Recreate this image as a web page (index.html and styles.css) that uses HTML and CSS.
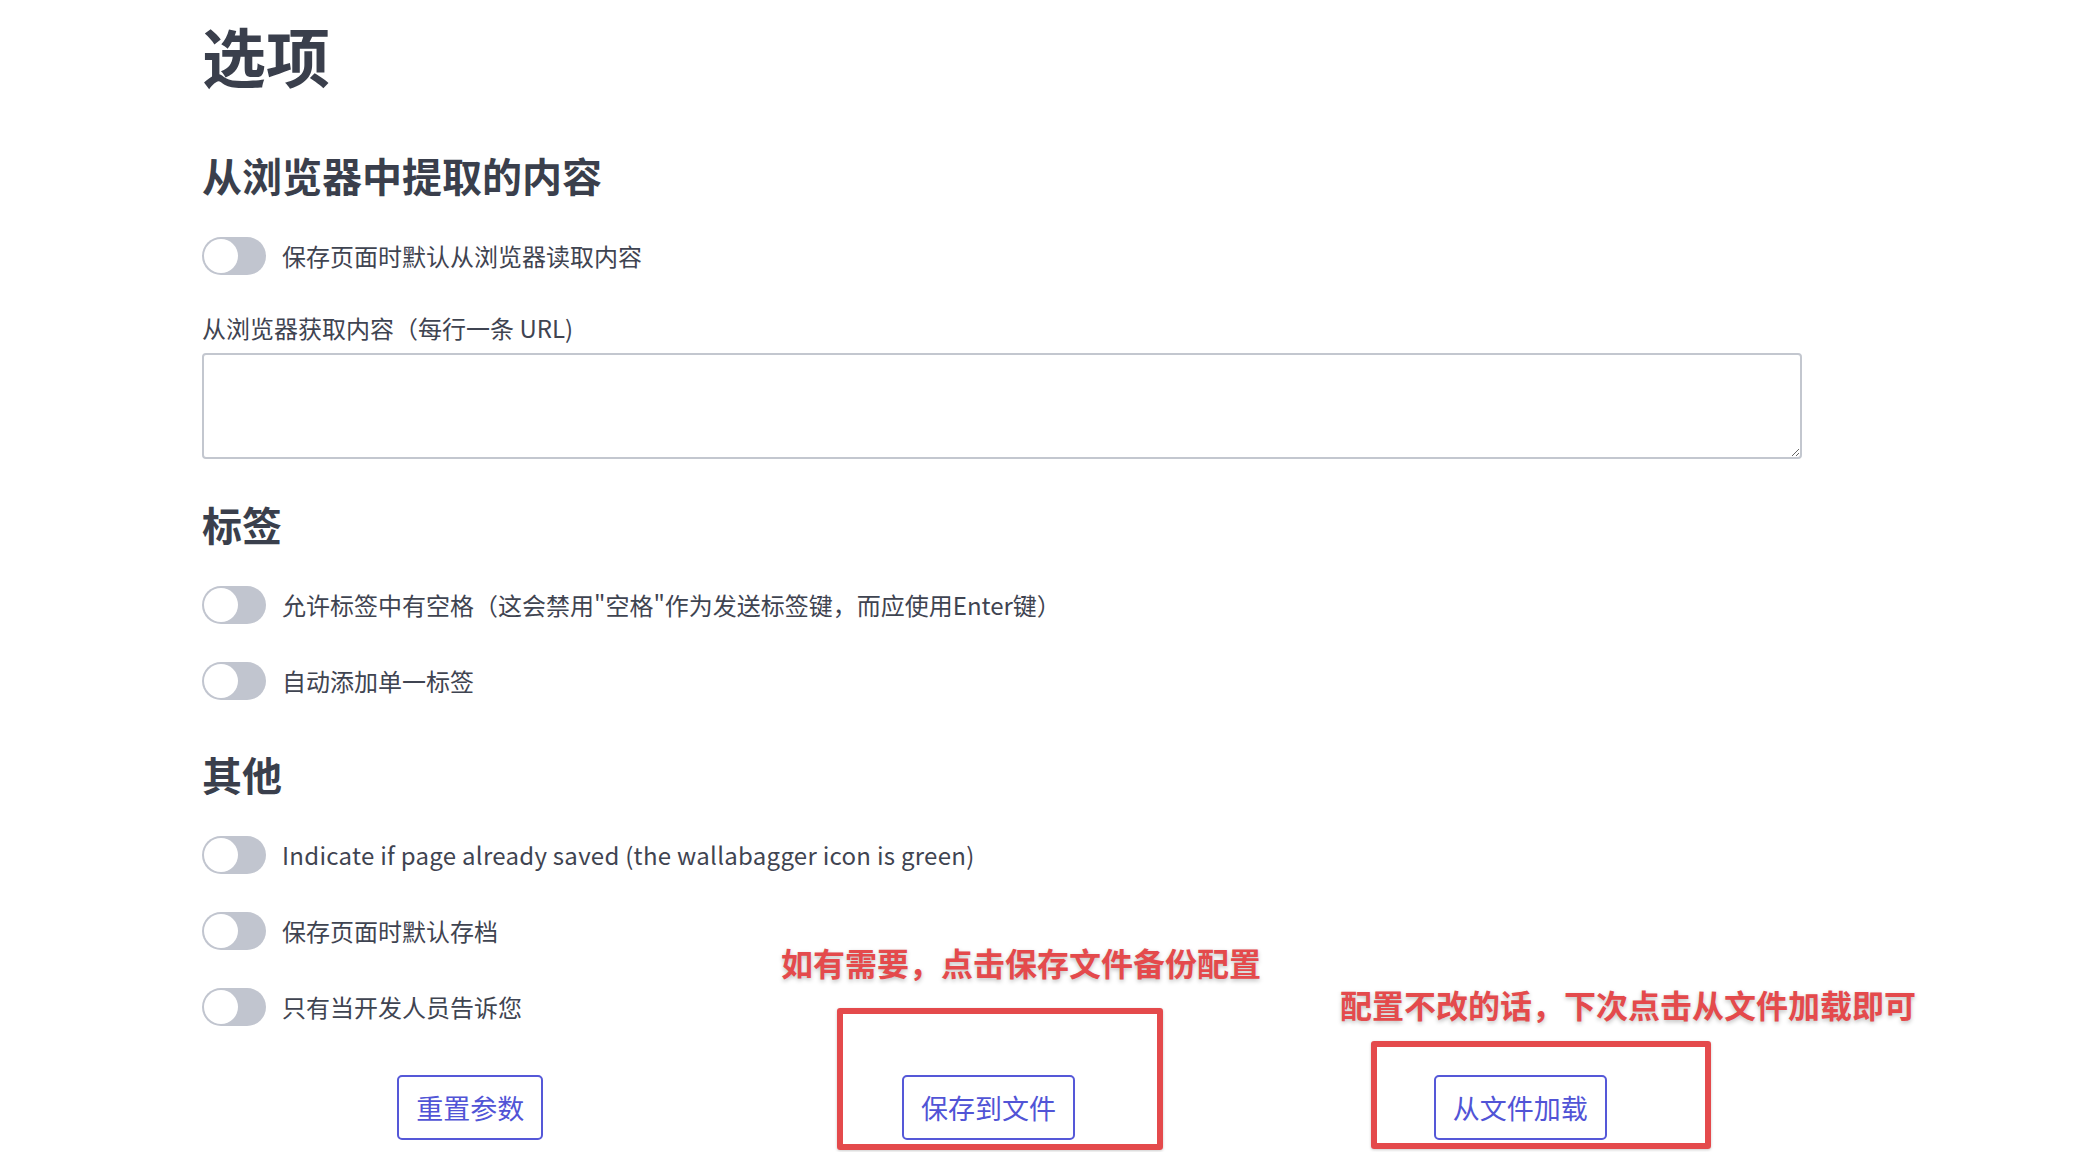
FILE: index.html
```html
<!DOCTYPE html>
<html lang="zh-CN">
<head>
    <meta charset="UTF-8">
    <meta name="viewport" content="width=device-width, initial-scale=1.0">
    <title>选项</title>
    <link rel="stylesheet" href="styles.css">
</head>
<body>
    <div class="page">
        <h1 class="page-title">选项</h1>

        <h2 class="section-title first">从浏览器中提取的内容</h2>
        <label class="option">
            <span class="toggle"><span class="knob"></span></span>
            <span class="option-text">保存页面时默认从浏览器读取内容</span>
        </label>
        <div class="field-label">从浏览器获取内容（每行一条 URL)</div>
        <textarea class="url-list"></textarea>

        <h2 class="section-title">标签</h2>
        <label class="option">
            <span class="toggle"><span class="knob"></span></span>
            <span class="option-text">允许标签中有空格（这会禁用"空格"作为发送标签键，而应使用Enter键）</span>
        </label>
        <label class="option">
            <span class="toggle"><span class="knob"></span></span>
            <span class="option-text">自动添加单一标签</span>
        </label>

        <h2 class="section-title other">其他</h2>
        <label class="option">
            <span class="toggle"><span class="knob"></span></span>
            <span class="option-text latin">Indicate if page already saved (the wallabagger icon is green)</span>
        </label>
        <label class="option">
            <span class="toggle"><span class="knob"></span></span>
            <span class="option-text">保存页面时默认存档</span>
        </label>
        <label class="option">
            <span class="toggle"><span class="knob"></span></span>
            <span class="option-text">只有当开发人员告诉您</span>
        </label>

        <div class="actions">
            <button class="btn">重置参数</button>
            <button class="btn">保存到文件</button>
            <button class="btn">从文件加载</button>
        </div>
    </div>

    <!-- annotations drawn over the screenshot -->
    <div class="note note-save">如有需要，点击保存文件备份配置</div>
    <div class="mark mark-save"></div>
    <div class="note note-load">配置不改的话，下次点击从文件加载即可</div>
    <div class="mark mark-load"></div>
</body>
</html>
```

FILE: styles.css
```css
html, body {
    margin: 0;
    padding: 0;
    height: 1152px;
    overflow: hidden;
    background: #fff;
}

body {
    font-family: "Noto Sans CJK SC", "Noto Sans", sans-serif;
    font-size: 24px;
    color: #3f4451;
    position: relative;
}

.page {
    width: 1600px;
    margin-left: 202px;
    padding-top: 16px;
    display: flex;
    flex-direction: column;
}

.page-title {
    margin: 0;
    font-size: 64px;
    line-height: 77px;
    font-weight: 700;
    color: #3a3f4c;
}

.section-title {
    margin: 41px 0 0;
    font-size: 40px;
    line-height: 48px;
    font-weight: 700;
    color: #3a3f4c;
}

.section-title.first {
    margin-top: 58px;
}

.section-title.other {
    margin-top: 50px;
}

.option {
    display: flex;
    align-items: center;
    gap: 16px;
    height: 38px;
    margin-top: 38px;
}

.toggle {
    position: relative;
    flex: none;
    width: 64px;
    height: 38px;
    border-radius: 19px;
    background: #c1c5cf;
}

.knob {
    position: absolute;
    left: 2px;
    top: 2px;
    width: 34px;
    height: 34px;
    border-radius: 50%;
    background: #fff;
}

.option-text {
    line-height: 32px;
}

.latin {
    letter-spacing: 0.28px;
}

.field-label {
    margin-top: 37px;
    line-height: 32px;
}

.url-list {
    display: block;
    box-sizing: border-box;
    width: 1600px;
    height: 106px;
    margin-top: 9px;
    border: 2px solid #c3c7cf;
    border-radius: 4px;
    font: inherit;
}

.actions {
    display: flex;
    justify-content: space-around;
    padding: 0 16px;
    margin-top: 49px;
}

.btn {
    height: 65px;
    padding: 0 17px;
    background: #fff;
    border: 2px solid #5558d8;
    border-radius: 5px;
    color: #5154d6;
    font-family: inherit;
    font-size: 27px;
    line-height: 1;
}

.note {
    position: absolute;
    font-size: 32px;
    line-height: 38px;
    font-weight: 700;
    color: #e44a4c;
    text-shadow: 0 2px 4px rgba(0, 0, 0, 0.25);
    white-space: nowrap;
}

.note-save {
    left: 781px;
    top: 943px;
}

.note-load {
    left: 1340px;
    top: 985px;
}

.mark {
    position: absolute;
    box-sizing: border-box;
    border: 6px solid #e44a4c;
    border-radius: 3px;
    box-shadow: 0 1px 3px rgba(0, 0, 0, 0.2);
}

.mark-save {
    left: 837px;
    top: 1008px;
    width: 326px;
    height: 142px;
}

.mark-load {
    left: 1371px;
    top: 1041px;
    width: 340px;
    height: 108px;
}
```
